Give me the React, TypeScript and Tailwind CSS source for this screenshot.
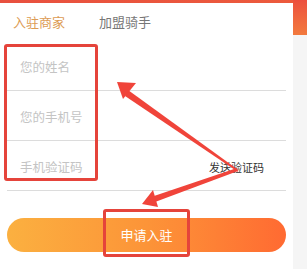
export default function App() {
  const font = { fontFamily: '"Noto Sans CJK SC", "Noto Sans", sans-serif' };
  return (
    <div className="relative flex h-[269px] w-[307px] overflow-hidden bg-white" style={font}>
      <div className="flex w-[293px] flex-col">
        <div className="h-[3px] bg-gradient-to-r from-[#e8503f] to-[#ec5a3c]" />
        <div className="flex h-[38px] items-center gap-[34px] pl-[13px] text-[13px]">
          <span className="text-[#dd9c55]">入驻商家</span>
          <span className="text-[#777]">加盟骑手</span>
        </div>
        <div className="mx-[7px] flex flex-col text-[12.5px]">
          <div className="flex h-[50px] items-center border-b border-[#dcdcdc] pl-[13px] pt-1 text-[#c4c4c4]">
            您的姓名
          </div>
          <div className="flex h-[50px] items-center border-b border-[#dcdcdc] pl-[13px] pt-1 text-[#c4c4c4]">
            您的手机号
          </div>
          <div className="flex h-[50px] items-center justify-between border-b border-[#dcdcdc] pl-[13px] pr-[22px] pt-1">
            <span className="text-[#c4c4c4]">手机验证码</span>
            <span className="text-[11px] text-[#333]">发送验证码</span>
          </div>
          <button className="mt-[27px] flex h-[34px] items-center justify-center rounded-full bg-gradient-to-r from-[#fbb040] via-[#fc9438] to-[#ff6a32] text-[13px] text-white">
            申请入驻
          </button>
        </div>
      </div>
      <div className="flex w-[14px] flex-col bg-[#f5f5f5]">
        <div className="h-[35px] bg-gradient-to-b from-[#ec4f3e] to-[#f27a3e]" />
      </div>

      {/* annotations */}
      <div className="absolute left-[4px] top-[44px] h-[137px] w-[94px] rounded-[3px] border-[3px] border-[#e5443b]" />
      <div className="absolute left-[103px] top-[209px] h-[48px] w-[87px] rounded-[3px] border-[3px] border-[#e5443b]" />
      <svg className="absolute left-0 top-0" width="307" height="269" viewBox="0 0 307 269">
        <g fill="#f0443a">
          <polygon points="237,169 128,90 125,96 238,172" />
          <polygon points="117,82 136,83 123,99" />
          <polygon points="237,168 154,196 155,202 238,171" />
          <polygon points="142,204 153,190 158,207" />
        </g>
      </svg>
    </div>
  );
}
